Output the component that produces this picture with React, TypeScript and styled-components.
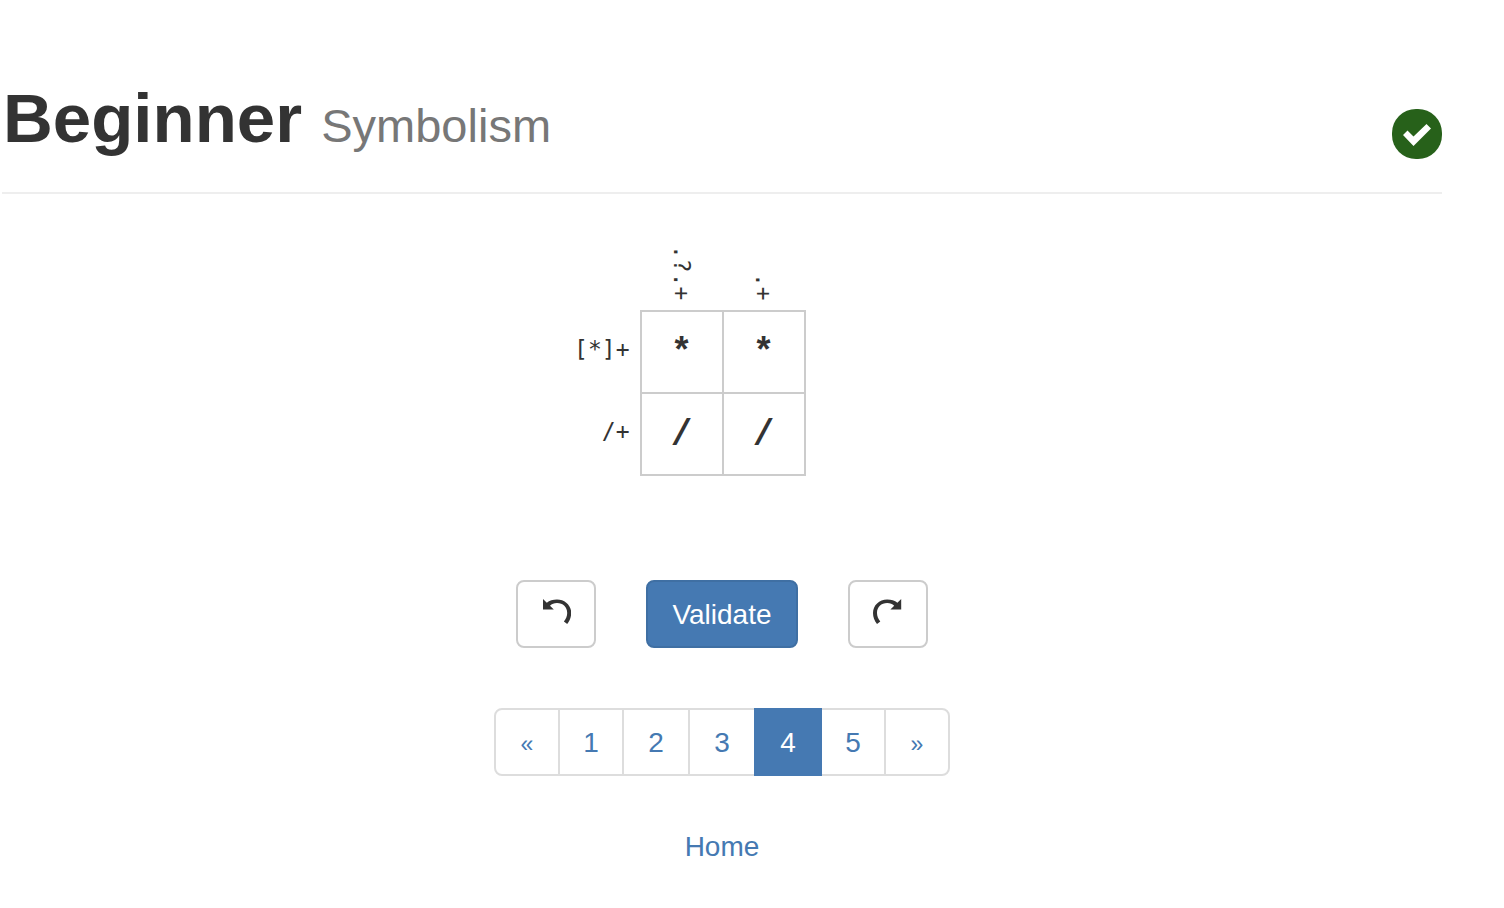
import React, { useState } from 'react';
import styled, { createGlobalStyle } from 'styled-components';

const GlobalStyle = createGlobalStyle`
  *, *::before, *::after { box-sizing: border-box; }
  body {
    margin: 0;
    background: #fff;
    color: #333;
    font-family: "Liberation Sans", Arial, sans-serif;
    font-size: 28px;
    line-height: 40px;
  }
`;

const Page = styled.main`
  display: flex;
  flex-direction: column;
  align-items: center;
  padding: 80px 62px 40px 4px;
`;

const Header = styled.header`
  display: flex;
  align-items: flex-start;
  justify-content: space-between;
  align-self: stretch;
  height: 114px;
  margin-left: -2px;
  padding-left: 1px;
  border-bottom: 2px solid #eee;
`;

const Title = styled.h1`
  margin: 0;
  font-size: 69px;
  line-height: 78px;
  font-weight: 700;
`;

const Subtitle = styled.small`
  font-size: 47px;
  line-height: 1;
  font-weight: 400;
  color: #777;
`;

const Status = styled.svg`
  width: 50px;
  height: 50px;
  margin-top: 29px;
`;

const Content = styled.div`
  display: flex;
  flex-direction: column;
  align-items: center;
  align-self: stretch;
  margin-left: -2px;
`;

const Puzzle = styled.table`
  margin: 51px 164px 0 0;
  border-collapse: collapse;
  font-family: "DejaVu Sans Mono", monospace;
  font-size: 23px;
  line-height: 26px;
`;

const ColumnClue = styled.th`
  height: 66px;
  padding: 0 0 10px;
  font-weight: 400;
  vertical-align: bottom;
`;

const VerticalText = styled.span`
  display: block;
  width: 26px;
  margin: 0 auto;
  writing-mode: vertical-rl;
`;

const RowClue = styled.th`
  width: 166px;
  padding: 0 10px 6px 0;
  font-weight: 400;
  text-align: right;
`;

const Cell = styled.td`
  width: 82px;
  height: 82px;
  padding: 0;
  border: 2px solid #ccc;
`;

const CellInput = styled.input`
  display: block;
  width: 80px;
  height: 80px;
  padding: 2px 0 0;
  border: 0;
  outline: 0;
  background: transparent;
  color: #333;
  font: 700 36px "Liberation Mono", monospace;
  text-align: center;
`;

const Actions = styled.div`
  display: flex;
  gap: 50px;
  margin-top: 104px;
`;

const Button = styled.button<{ $primary?: boolean }>`
  display: flex;
  align-items: center;
  justify-content: center;
  width: ${(p) => (p.$primary ? 152 : 80)}px;
  height: 68px;
  padding: ${(p) => (p.$primary ? '2px 0 0' : '0 0 2px')};
  border: 2px solid ${(p) => (p.$primary ? '#3f6fa3' : '#ccc')};
  border-radius: 8px;
  background: ${(p) => (p.$primary ? '#4579b2' : '#fff')};
  color: ${(p) => (p.$primary ? '#fff' : '#333')};
  font: inherit;
  cursor: pointer;
`;

const ArrowIcon = styled.svg`
  width: 30px;
  height: 28px;
`;

const Pagination = styled.ul`
  display: flex;
  margin: 60px 0 0;
  padding: 0;
  list-style: none;
`;

const PageItem = styled.li`
  & + & { margin-left: -2px; }
  &:first-child a { border-radius: 8px 0 0 8px; }
  &:last-child a { border-radius: 0 8px 8px 0; }
`;

const PageLink = styled.a<{ $wide?: boolean; $active?: boolean; $arrow?: boolean }>`
  position: relative;
  z-index: ${(p) => (p.$active ? 1 : 0)};
  display: block;
  width: ${(p) => (p.$wide ? 68 : 66)}px;
  height: 68px;
  padding: ${(p) => (p.$arrow ? 14 : 13)}px 0 0;
  border: 2px solid ${(p) => (p.$active ? '#4579b2' : '#ddd')};
  background: ${(p) => (p.$active ? '#4579b2' : 'transparent')};
  color: ${(p) => (p.$active ? '#fff' : '#4579b2')};
  font-size: ${(p) => (p.$arrow ? 23 : 28)}px;
  text-align: center;
  text-decoration: none;
`;

const HomeLink = styled.a`
  margin-top: 51px;
  color: #4579b2;
  text-decoration: none;
`;

const columns = ['.?.+', '.+'];
const rows = ['[*]+', '/+'];
const pages = [
  { label: '«', name: 'Previous' },
  { label: '1' },
  { label: '2', wide: true },
  { label: '3', wide: true },
  { label: '4', wide: true, active: true },
  { label: '5' },
  { label: '»', name: 'Next' },
];

function UndoArrow() {
  return (
    <ArrowIcon viewBox="-2 0 30 28" aria-hidden="true">
      <path d="M0 0 3.800 3.800C6.400 1.400 10 0.400 14 0.400 22 0.400 28.200 6.200 28.200 14 28.200 18 26.800 21.800 24.200 25L20.900 22.500C23 20 24.200 17.200 24.200 14 24.200 8.200 20 4.100 14 4.100 11 4.100 8.800 5 7 6.800L10.800 10.600H0Z" fill="currentColor" />
    </ArrowIcon>
  );
}

function RedoArrow() {
  return (
    <ArrowIcon viewBox="0 0 30 28" aria-hidden="true">
      <path d="M28.200 0 24.400 3.800C21.800 1.400 18.200 0.400 14.200 0.400 6.200 0.400 0 6.200 0 14 0 18 1.400 21.800 4 25L7.300 22.500C5.200 20 4 17.200 4 14 4 8.200 8.200 4.100 14.200 4.100 17.200 4.100 19.400 5 21.200 6.800L17.400 10.600H28.200Z" fill="currentColor" />
    </ArrowIcon>
  );
}

export default function App() {
  const [answers, setAnswers] = useState([['*', '*'], ['/', '/']]);
  const update = (r: number, c: number, value: string) =>
    setAnswers(answers.map((row, i) => row.map((v, j) => (i === r && j === c ? value : v))));

  return (
    <>
      <GlobalStyle />
      <Page>
        <Header>
          <Title>Beginner <Subtitle>Symbolism</Subtitle></Title>
          <Status viewBox="0 0 50 50" role="img" aria-label="Solved">
            <rect width="50" height="50" rx="24" fill="#27611a" />
            <path d="M11 26 15.500 21.500 21.500 27.500 34.500 15 39 19.500 21.500 37Z" fill="#fff" />
          </Status>
        </Header>
        <Content>
          <Puzzle>
            <thead>
              <tr>
                <td />
                {columns.map((clue) => (
                  <ColumnClue key={clue} scope="col"><VerticalText>{clue}</VerticalText></ColumnClue>
                ))}
              </tr>
            </thead>
            <tbody>
              {rows.map((clue, r) => (
                <tr key={clue}>
                  <RowClue scope="row">{clue}</RowClue>
                  {columns.map((column, c) => (
                    <Cell key={column}>
                      <CellInput
                        aria-label={`${clue} ${column}`}
                        maxLength={1}
                        value={answers[r][c]}
                        onChange={(e) => update(r, c, e.target.value)}
                      />
                    </Cell>
                  ))}
                </tr>
              ))}
            </tbody>
          </Puzzle>
          <Actions>
            <Button type="button" aria-label="Undo"><UndoArrow /></Button>
            <Button type="button" $primary>Validate</Button>
            <Button type="button" aria-label="Redo"><RedoArrow /></Button>
          </Actions>
          <nav aria-label="Puzzles">
            <Pagination>
              {pages.map((p) => (
                <PageItem key={p.label}>
                  <PageLink
                    href="#"
                    $wide={p.wide}
                    $active={p.active}
                    $arrow={Boolean(p.name)}
                    aria-label={p.name}
                    aria-current={p.active ? 'page' : undefined}
                  >
                    {p.label}
                  </PageLink>
                </PageItem>
              ))}
            </Pagination>
          </nav>
          <HomeLink href="#">Home</HomeLink>
        </Content>
      </Page>
    </>
  );
}
